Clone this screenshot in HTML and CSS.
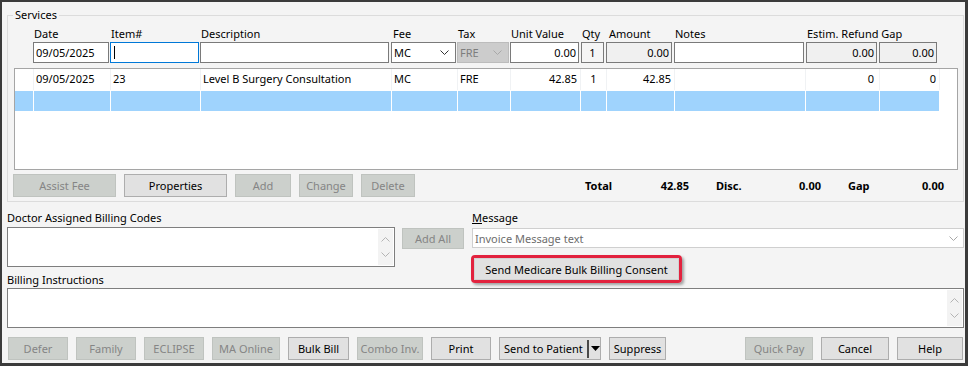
FILE: index.html
```html
<!DOCTYPE html>
<html lang="en">
<head>
  <meta charset="UTF-8" />
  <title>Invoice Services</title>
  <link rel="stylesheet" href="styles.css">
</head>
<body>
  <div class="window">
    <fieldset class="services">
      <legend>Services</legend>

      <div class="cols head-row">
        <span>Date</span>
        <span>Item#</span>
        <span>Description</span>
        <span class="pad2">Fee</span>
        <span>Tax</span>
        <span>Unit Value</span>
        <span>Qty</span>
        <span class="pad3">Amount</span>
        <span>Notes</span>
        <span class="wide">Estim. Refund Gap</span>
        <span></span>
      </div>

      <div class="cols entry-row">
        <div class="field tight">09/05/2025</div>
        <div class="field tight focus"><span class="caret"></span></div>
        <div class="field"></div>
        <div class="field tight select">
          <span>MC</span>
          <svg width="9" height="5" viewBox="0 0 9 5"><polyline points="0.5,0.5 4.5,4.5 8.5,0.5" fill="none" stroke="#333" stroke-width="1"/></svg>
        </div>
        <div class="field tight select disabled">
          <span>FRE</span>
          <svg width="9" height="5" viewBox="0 0 9 5"><polyline points="0.5,0.5 4.5,4.5 8.5,0.5" fill="none" stroke="#a8a8a8" stroke-width="1"/></svg>
        </div>
        <div class="field num">0.00</div>
        <div class="field center soft">1</div>
        <div class="field num grey">0.00</div>
        <div class="field"></div>
        <div class="field num grey">0.00</div>
        <div class="field num grey">0.00</div>
      </div>

      <div class="list">
        <div class="row">
          <div class="cell"></div>
          <div class="cell">09/05/2025</div>
          <div class="cell">23</div>
          <div class="cell">Level B Surgery Consultation</div>
          <div class="cell">MC</div>
          <div class="cell">FRE</div>
          <div class="cell num">42.85</div>
          <div class="cell center">1</div>
          <div class="cell num">42.85</div>
          <div class="cell"></div>
          <div class="cell num far">0</div>
          <div class="cell num">0</div>
        </div>
        <div class="row selected">
          <div class="cell"></div>
          <div class="cell"></div>
          <div class="cell"></div>
          <div class="cell"></div>
          <div class="cell"></div>
          <div class="cell"></div>
          <div class="cell"></div>
          <div class="cell"></div>
          <div class="cell"></div>
          <div class="cell"></div>
          <div class="cell"></div>
          <div class="cell"></div>
        </div>
      </div>

      <div class="list-actions">
        <button class="btn off w103">Assist Fee</button>
        <button class="btn w103">Properties</button>
        <button class="btn off w56">Add</button>
        <button class="btn off w54">Change</button>
        <button class="btn off w54">Delete</button>

        <div class="totals">
          <span class="t-total">Total</span>
          <span class="t-val v1">42.85</span>
          <span class="t-label">Disc.</span>
          <span class="t-val v2">0.00</span>
          <span class="t-label">Gap</span>
          <span class="t-val v3">0.00</span>
        </div>
      </div>
    </fieldset>

    <div class="lower">
      <div class="label codes-label">Doctor Assigned Billing Codes</div>
      <div class="label msg-label"><u>M</u>essage</div>

      <div class="memo codes">
        <div class="scroll">
          <svg width="9" height="5" viewBox="0 0 9 5"><polyline points="0.5,4.5 4.5,0.5 8.5,4.5" fill="none" stroke="#b4b4b4"/></svg>
          <svg width="9" height="5" viewBox="0 0 9 5"><polyline points="0.5,0.5 4.5,4.5 8.5,0.5" fill="none" stroke="#b4b4b4"/></svg>
        </div>
      </div>
      <button class="btn off add-all">Add All</button>

      <div class="msg-col">
        <div class="combo">
          <span>Invoice Message text</span>
          <svg width="9" height="5" viewBox="0 0 9 5"><polyline points="0.5,0.5 4.5,4.5 8.5,0.5" fill="none" stroke="#a8a8a8"/></svg>
        </div>
        <div class="highlight">
          <button class="btn consent">Send Medicare Bulk Billing Consent</button>
        </div>
      </div>

      <div class="label instr-label">Billing Instructions</div>

      <div class="memo instr">
        <div class="scroll">
          <svg width="9" height="5" viewBox="0 0 9 5"><polyline points="0.5,4.5 4.5,0.5 8.5,4.5" fill="none" stroke="#b4b4b4"/></svg>
          <svg width="9" height="5" viewBox="0 0 9 5"><polyline points="0.5,0.5 4.5,4.5 8.5,0.5" fill="none" stroke="#b4b4b4"/></svg>
        </div>
      </div>
    </div>

    <div class="footer">
      <button class="btn off w60">Defer</button>
      <button class="btn off w60">Family</button>
      <button class="btn off w60">ECLIPSE</button>
      <button class="btn off w68">MA Online</button>
      <button class="btn w61">Bulk Bill</button>
      <button class="btn off w66">Combo Inv.</button>
      <button class="btn w60">Print</button>
      <button class="btn split">
        <span>Send to Patient</span>
        <span class="split-line"></span>
        <svg width="9" height="5" viewBox="0 0 9 5"><polygon points="0,0 9,0 4.5,5" fill="#000"/></svg>
      </button>
      <button class="btn w57">Suppress</button>

      <div class="footer-right">
        <button class="btn off w68">Quick Pay</button>
        <button class="btn w68">Cancel</button>
        <button class="btn w66">Help</button>
      </div>
    </div>
  </div>
</body>
</html>
```

FILE: styles.css
```css
* {
  box-sizing: border-box;
}

body {
  margin: 0;
  font-family: "Noto Sans", "Open Sans", sans-serif;
  font-size: 11px;
  color: #000;
  background: #f4f4f4;
}

.window {
  width: 968px;
  height: 366px;
  border: 2px solid #3b3b3b;
  border-right-width: 3px;
  border-bottom-width: 3px;
  background: #f4f4f4;
  padding: 5px 1px 0 5px;
  overflow: hidden;
}

/* Services group */
.services {
  margin: 0;
  padding: 0 0 4px;
  border: 1px solid #dcdcdc;
  min-width: 0;
}

.services legend {
  margin-left: 5px;
  padding: 0 2px;
  line-height: 16px;
}

.cols {
  display: grid;
  grid-template-columns: 77px 90px 191px 66px 53px 71px 25px 68px 132px 73px 60px;
  margin-left: 25px;
}

.head-row {
  height: 15px;
  line-height: 15px;
  margin-top: 3px;
}

.head-row span {
  padding-left: 1px;
  white-space: nowrap;
}

.head-row .pad2 {
  padding-left: 2px;
}

.head-row .pad3 {
  padding-left: 3px;
}

.entry-row {
  margin-top: 1px;
}

.field {
  width: calc(100% - 2px);
  height: 21px;
  border: 1px solid #7a7a7a;
  background: #fff;
  padding: 0 2px;
  line-height: 19px;
  white-space: nowrap;
  overflow: hidden;
}

.field.tight {
  width: calc(100% - 1px);
}

.field.focus {
  border-color: #0078d7;
  display: flex;
  align-items: center;
}

.caret {
  display: inline-block;
  width: 1px;
  height: 13px;
  background: #000;
  margin-left: 1px;
}

.field.select {
  display: flex;
  align-items: center;
  justify-content: space-between;
  padding-right: 6px;
}

.field.disabled {
  background: #cccccc;
  border-color: #bcbcbc;
  color: #7d7d7d;
}

.field.num {
  text-align: right;
}

.field.center {
  text-align: center;
}

.field.grey {
  background: #f0f0f0;
}

.field.soft {
  background: #f5f5f5;
}

/* Service list */
.list {
  margin: 5px 5px 0 6px;
  height: 102px;
  border: 1px solid #a5a5a5;
  background: #fff;
}

.row {
  display: grid;
  grid-template-columns: 19px 77px 90px 191px 66px 53px 70px 26px 68px 131px 74px 60px;
  height: 22px;
  border-bottom: 1px solid #fff;
}

.row .cell {
  border-right: 1px solid #f0f2f4;
  padding: 0 2px;
  line-height: 20px;
  white-space: nowrap;
  overflow: hidden;
}

.row .cell.num {
  text-align: right;
  padding-right: 3px;
}

.row .cell.far {
  padding-right: 5px;
}

.row .cell.center {
  text-align: center;
}

.row.selected {
  height: 21px;
}

.row.selected .cell {
  background: #9fd3fd;
  border-right-color: #fff;
}

/* Buttons */
.btn {
  font-family: inherit;
  font-size: inherit;
  color: #000;
  height: 23px;
  padding: 0;
  margin: 0;
  background: #e1e1e1;
  border: 1px solid #adadad;
  border-radius: 0;
  white-space: nowrap;
}

.btn.off {
  background: #ccd0cc;
  border-color: #bfc3bf;
  color: #858585;
}

.w54 { width: 54px; }
.w56 { width: 56px; }
.w57 { width: 57px; }
.w60 { width: 60px; }
.w61 { width: 61px; }
.w66 { width: 66px; }
.w68 { width: 68px; }
.w103 { width: 103px; }

.list-actions {
  display: flex;
  gap: 8px;
  margin: 4px 0 0 5px;
  align-items: center;
}

.totals {
  margin-left: auto;
  margin-right: 19px;
  display: flex;
  font-weight: 700;
}

.t-total { width: 56px; }
.t-label { width: 82px; padding-left: 27px; }
.t-label + .t-val + .t-label { width: 77px; }
.t-val { text-align: right; }
.v1 { width: 48px; }
.v2 { width: 50px; }
.v3 { width: 46px; }

/* Lower section */
.lower {
  display: grid;
  grid-template-columns: 388px 62px 1fr;
  grid-template-rows: 16px 40px 21px 40px;
  column-gap: 7px;
  margin-top: 9px;
}

.label {
  line-height: 14px;
  white-space: nowrap;
}

.codes-label {
  grid-column: 1 / 3;
  grid-row: 1;
}

.msg-label {
  grid-column: 3;
  grid-row: 1;
  margin-left: 1px;
}

.memo {
  border: 1px solid #7e7e7e;
  background: #fff;
  display: flex;
  justify-content: flex-end;
  padding: 1px;
}

.codes {
  grid-column: 1;
  grid-row: 2;
}

.scroll {
  width: 15px;
  background: #f3f3f3;
  display: flex;
  flex-direction: column;
  justify-content: space-around;
  align-items: center;
  padding: 3px 0;
}

.add-all {
  grid-column: 2;
  grid-row: 2;
  height: 21px;
  margin-top: 1px;
}

.msg-col {
  grid-column: 3;
  grid-row: 2 / 4;
  margin-left: 1px;
  padding-top: 1px;
  display: flex;
  flex-direction: column;
  align-items: flex-start;
}

.combo {
  width: 100%;
  height: 20px;
  border: 1px solid #cfcfcf;
  background: #fff;
  color: #6d6d6d;
  display: flex;
  align-items: center;
  justify-content: space-between;
  padding: 0 5px 0 2px;
}

.highlight {
  margin-top: 7px;
  margin-left: -1px;
  border: 3px solid #e2223e;
  border-radius: 4px;
  box-shadow: 2px 2px 3px rgba(0, 0, 0, 0.35);
}

.consent {
  display: block;
  width: 205px;
  height: 22px;
  border-color: #d2d2d2;
}

.instr-label {
  grid-column: 1 / -1;
  grid-row: 3;
  padding-top: 6px;
}

.instr {
  grid-column: 1 / -1;
  grid-row: 4;
}

/* Footer */
.footer {
  display: flex;
  gap: 8px;
  margin-top: 9px;
  padding-left: 1px;
  padding-right: 1px;
}

.split {
  width: 102px;
  display: flex;
  align-items: center;
  padding: 0 0 0 4px;
}

.split-line {
  width: 2px;
  height: 18px;
  background: #4a4a4a;
  margin: 0 2px 0 4px;
}

.footer-right {
  margin-left: auto;
  display: flex;
  gap: 8px;
}
```
